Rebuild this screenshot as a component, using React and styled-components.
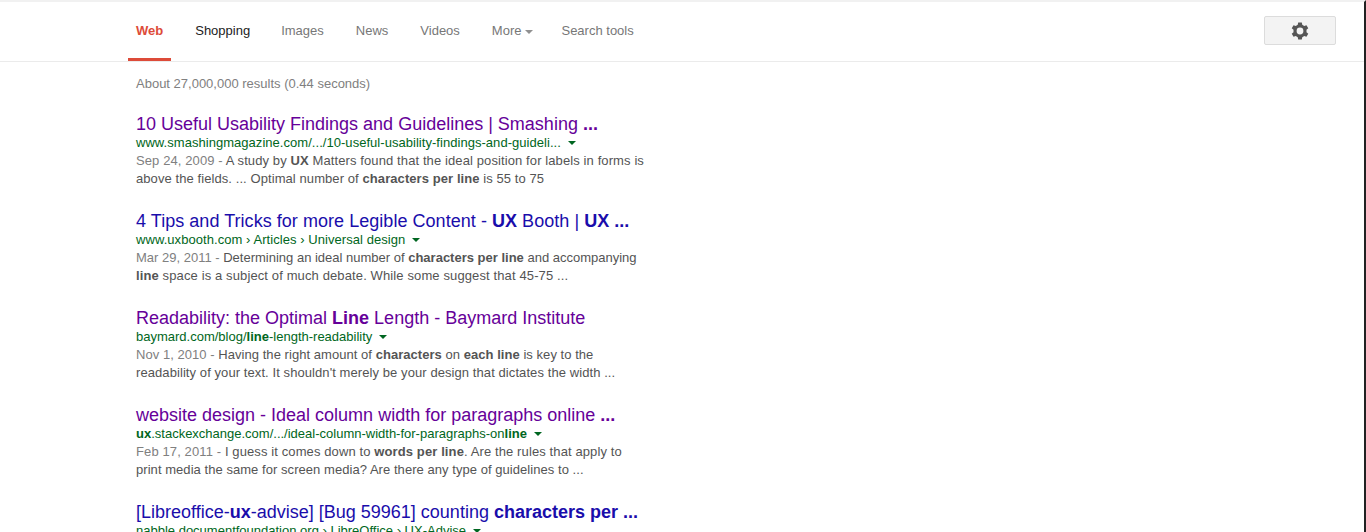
import React from 'react';
import styled, { createGlobalStyle } from 'styled-components';

const GlobalStyle = createGlobalStyle`
  html, body {
    margin: 0;
    height: 100%;
    overflow: hidden;
    background: #fff;
    font-family: "Liberation Sans", Arial, sans-serif;
  }
`;

const Page = styled.div`
  height: 532px;
  overflow: hidden;
  border-top: 2px solid #f1f1f1;
  border-right: 2px solid #222;
  box-sizing: border-box;
`;

const TopBar = styled.div`
  height: 59px;
  border-bottom: 1px solid #ebebeb;
  display: flex;
  align-items: stretch;
  justify-content: space-between;
  padding-left: 136px;
  padding-right: 28px;
`;

const Tabs = styled.nav`
  display: flex;
  align-items: stretch;
`;

const Tab = styled.a`
  font-size: 13px;
  line-height: 16px;
  padding-top: 21px;
  margin-right: ${(p) => p.$gap}px;
  color: ${(p) => p.$color || '#777'};
  font-weight: ${(p) => (p.$active ? 'bold' : 'normal')};
  position: relative;
  display: flex;
  gap: 4px;
  white-space: nowrap;
`;

const ActiveLine = styled.span`
  position: absolute;
  left: -8px;
  right: -8px;
  bottom: 0;
  height: 3px;
  background: #dd4b39;
`;

const TabCaret = styled.span`
  width: 0;
  height: 0;
  margin-top: 7px;
  border-left: 4px solid transparent;
  border-right: 4px solid transparent;
  border-top: 4px solid #909090;
`;

const GearButton = styled.button`
  width: 72px;
  height: 29px;
  margin-top: 14px;
  padding: 0;
  box-sizing: border-box;
  border: 1px solid #dcdcdc;
  border-radius: 2px;
  background: #f3f3f3;
  display: flex;
  align-items: center;
  justify-content: center;
`;

const Content = styled.main`
  padding-left: 136px;
  width: 520px;
`;

const Stats = styled.div`
  font-size: 13px;
  line-height: 16px;
  color: #808080;
  padding-top: 14px;
  margin-bottom: 22px;
`;

const Result = styled.div`
  margin-bottom: 23px;
  white-space: nowrap;
`;

const Title = styled.a`
  display: block;
  font-size: 18px;
  line-height: 21px;
  color: ${(p) => (p.$visited ? '#609' : '#1a0dab')};
  letter-spacing: ${(p) => p.$track || 0}px;
`;

const UrlLine = styled.div`
  display: flex;
  align-items: flex-start;
  font-size: 13px;
  line-height: 16px;
  color: #006621;
  height: 17px;
  letter-spacing: ${(p) => p.$track || 0}px;
`;

const UrlCaret = styled.span`
  width: 0;
  height: 0;
  margin: 6px 0 0 7px;
  border-left: 4px solid transparent;
  border-right: 4px solid transparent;
  border-top: 4px solid #006621;
`;

const Snippet = styled.div`
  font-size: 13px;
  line-height: 18px;
  color: #545454;
`;

const SnippetLine = styled.div`
  letter-spacing: ${(p) => p.$track || 0}px;
`;

const DateText = styled.span`
  color: #808080;
`;

const results = [
  {
    visited: true,
    title: <>10 Useful Usability Findings and Guidelines | Smashing <b>...</b></>,
    url: <>www.smashingmagazine.com/.../10-useful-usability-findings-and-guideli...</>,
    urlTrack: 0.04,
    date: 'Sep 24, 2009',
    lines: [
      { track: 0.105, text: <>A study by <b>UX</b> Matters found that the ideal position for labels in forms is</> },
      { track: 0.08, text: <>above the fields. ... Optimal number of <b>characters per line</b> is 55 to 75</> },
    ],
  },
  {
    title: <>4 Tips and Tricks for more Legible Content - <b>UX</b> Booth | <b>UX</b> <b>...</b></>,
    titleTrack: 0.04,
    url: <>www.uxbooth.com › Articles › Universal design</>,
    urlTrack: 0.06,
    date: 'Mar 29, 2011',
    lines: [
      { track: 0, text: <>Determining an ideal number of <b>characters per line</b> and accompanying</> },
      { track: 0.12, text: <><b>line</b> space is a subject of much debate. While some suggest that 45-75 ...</> },
    ],
  },
  {
    visited: true,
    title: <>Readability: the Optimal <b>Line</b> Length - Baymard Institute</>,
    url: <>baymard.com/blog/<b>line</b>-length-readability</>,
    date: 'Nov 1, 2010',
    lines: [
      { track: 0.045, text: <>Having the right amount of <b>characters</b> on <b>each line</b> is key to the</> },
      { track: 0.08, text: <>readability of your text. It shouldn't merely be your design that dictates the width ...</> },
    ],
  },
  {
    visited: true,
    title: <>website design - Ideal column width for paragraphs online <b>...</b></>,
    url: <><b>ux</b>.stackexchange.com/.../ideal-column-width-for-paragraphs-on<b>line</b></>,
    date: 'Feb 17, 2011',
    lines: [
      { track: 0.11, text: <>I guess it comes down to <b>words per line</b>. Are the rules that apply to</> },
      { track: 0.05, text: <>print media the same for screen media? Are there any type of guidelines to ...</> },
    ],
  },
  {
    title: <>[Libreoffice-<b>ux</b>-advise] [Bug 59961] counting <b>characters per ...</b></>,
    url: <>nabble.documentfoundation.org › LibreOffice › UX-Advise</>,
  },
];

const tabs = [
  { label: 'Web', color: '#dd4b39', active: true, gap: 32 },
  { label: 'Shopping', color: '#222', gap: 31 },
  { label: 'Images', gap: 32 },
  { label: 'News', gap: 32 },
  { label: 'Videos', gap: 32 },
  { label: 'More', caret: true, gap: 28 },
  { label: 'Search tools', gap: 0 },
];

const GearIcon = () => (
  <svg width="18" height="18" viewBox="0 0 18 18">
    <path
      fillRule="evenodd"
      fill="#555"
      d="M7.19.49h3.62l.45 2.31 1.98 1.14 2.22-.76 1.81 3.13-1.77 1.54v2.3l1.77 1.54-1.81 3.13-2.22-.76-1.98 1.14-.45 2.31H7.19l-.45-2.31-1.98-1.14-2.22.76-1.81-3.13 1.77-1.54v-2.3L.73 6.31l1.81-3.13 2.22.76 1.98-1.14zM9 5.6a3.4 3.4 0 1 0 0 6.8 3.4 3.4 0 0 0 0-6.800z"
    />
  </svg>
);

export default function App() {
  return (
    <>
      <GlobalStyle />
      <Page>
        <TopBar>
          <Tabs>
            {tabs.map((tab) => (
              <Tab key={tab.label} $color={tab.color} $active={tab.active} $gap={tab.gap}>
                {tab.label}
                {tab.caret && <TabCaret />}
                {tab.active && <ActiveLine />}
              </Tab>
            ))}
          </Tabs>
          <GearButton aria-label="Settings">
            <GearIcon />
          </GearButton>
        </TopBar>
        <Content>
          <Stats>About 27,000,000 results (0.44 seconds)</Stats>
          {results.map((r, i) => (
            <Result key={i}>
              <Title $visited={r.visited} $track={r.titleTrack}>{r.title}</Title>
              <UrlLine $track={r.urlTrack}>
                {r.url}
                <UrlCaret />
              </UrlLine>
              {r.date && (
                <Snippet>
                  {r.lines.map((line, n) => (
                    <SnippetLine key={n} $track={line.track}>
                      {n === 0 && <DateText>{r.date} - </DateText>}
                      {line.text}
                    </SnippetLine>
                  ))}
                </Snippet>
              )}
            </Result>
          ))}
        </Content>
      </Page>
    </>
  );
}
